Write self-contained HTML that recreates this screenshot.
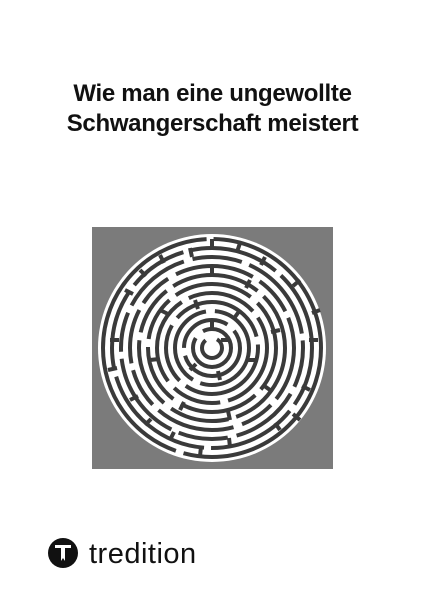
<!DOCTYPE html>
<html><head><style>
body{margin:0;width:425px;height:600px;background:#fff;position:relative;overflow:hidden;font-family:"Liberation Sans",sans-serif}
.t{position:absolute;left:0;width:425px;text-align:center;font-weight:bold;font-size:24px;color:#111;letter-spacing:-0.3px}
</style></head><body>
<div class="t" style="top:80px">Wie man eine ungewollte</div>
<div class="t" style="top:110px">Schwangerschaft meistert</div>
<svg style="position:absolute;left:0;top:0" width="425" height="600">
<rect x="92" y="227" width="241" height="242" fill="#7b7b7b"/>
<circle cx="212" cy="348" r="114" fill="#fff"/>
<g fill="none" stroke="#3a3a3a" stroke-width="4">
<circle cx="212" cy="348" r="109" stroke-dasharray="200 8 300 7"/>
<circle cx="212" cy="348" r="100" stroke-dasharray="60 8 90 7 120 9 80 8"/>
<circle cx="212" cy="348" r="91" stroke-dasharray="40 8 70 9 50 8 90 7"/>
<circle cx="212" cy="348" r="82" stroke-dasharray="55 8 35 9 80 8 40 7"/>
<circle cx="212" cy="348" r="73" stroke-dasharray="90 8 60 9 70 8 50 8"/>
<circle cx="212" cy="348" r="64" stroke-dasharray="45 8 80 9 60 8"/>
<circle cx="212" cy="348" r="55" stroke-dasharray="70 8 50 9 90 8"/>
<circle cx="212" cy="348" r="46" stroke-dasharray="100 8 60 9"/>
<circle cx="212" cy="348" r="37" stroke-dasharray="70 8 90 9"/>
<circle cx="212" cy="348" r="28" stroke-dasharray="80 8 60 9"/>
<circle cx="212" cy="348" r="19" stroke-dasharray="70 10"/>
<circle cx="212" cy="348" r="10" stroke-dasharray="40 12"/>
<g stroke-linecap="butt">
<path d="M212 239v9M240 243l-3 9M300 280l-7 6M318 340h-9M310 390l-8-4M280 430l-5-7M230 447l-1-9M170 440l4-8M130 400l8-4M110 340h9M125 290l8 4M160 255l4 8M190 248l2 9M265 257l-4 8M320 310l-8 3M300 420l-7-6M200 456l1-9M145 425l6-6M108 370l9-2M140 270l6 6M212 266v9M250 280l-4 8M280 330l-9 2M270 390l-7-5M230 420l-2-9M180 410l4-8M150 360l9-1M160 310l8 4M195 300l3 9M240 310l-5 7M255 360l-9 0M220 380l-2-9M190 370l6-6M212 320v9M230 340h-9"/>
</g>
</g>
<circle cx="63" cy="553" r="15" fill="#111"/>
<path d="M55 545h16v3h-6v13l-2-3-2 3v-13h-6z" fill="#fff"/>
<text x="89" y="563" font-family="Liberation Sans, sans-serif" font-size="29" letter-spacing="0.5" fill="#111">tredition</text>
</svg>
</body></html>
